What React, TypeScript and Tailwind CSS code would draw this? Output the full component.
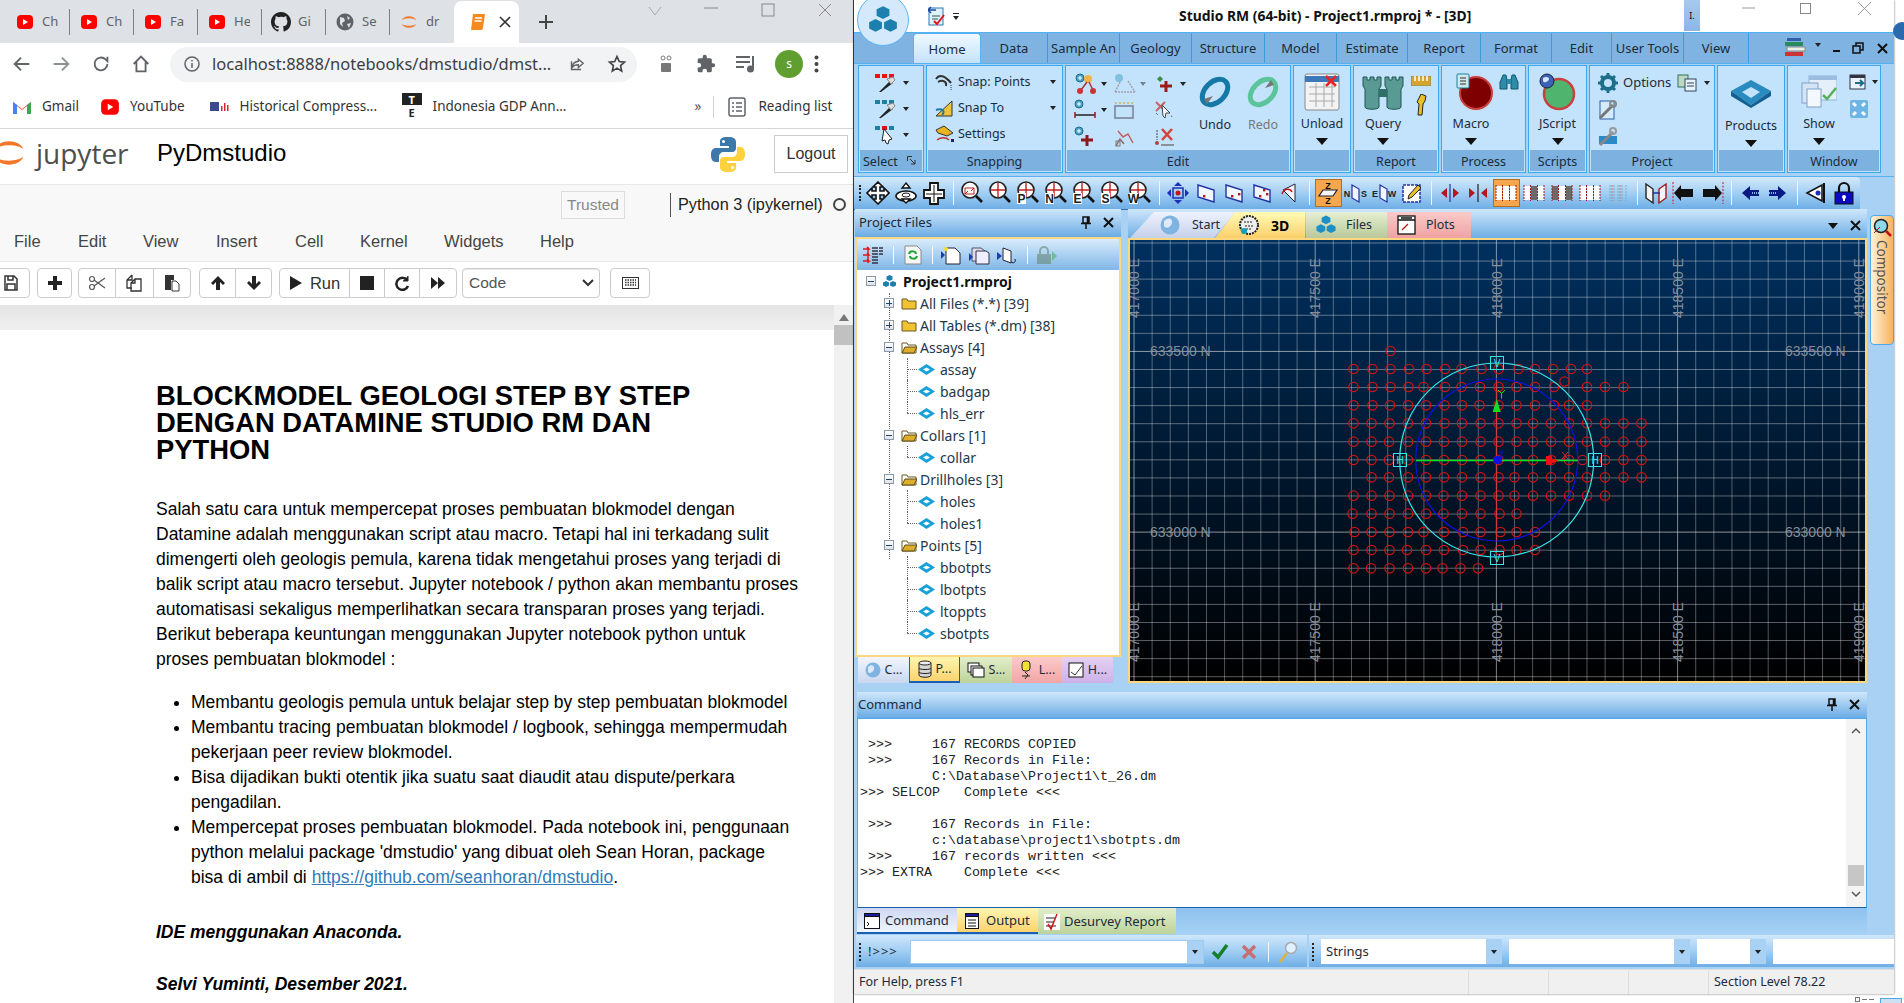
import React from "react";

const UI = "'Noto Sans', 'Open Sans', sans-serif";

// --- small drawings used around the browser window ---
function Yt({ size = 18 }: { size?: number }) {
  return (
    <svg width={size} height={size} viewBox="0 0 18 18">
      <rect x="1" y="2" width="16" height="14" rx="4" fill="#f00" />
      <path d="M7 6l5 3-5 3z" fill="#fff" />
    </svg>
  );
}

function GithubMark() {
  return (
    <svg width="20" height="20" viewBox="0 0 16 16" fill="#222">
      <path d="M8 0C3.58 0 0 3.58 0 8c0 3.54 2.29 6.53 5.47 7.59.4.07.55-.17.55-.38v-1.34c-2.23.48-2.7-1.07-2.7-1.07-.36-.92-.89-1.17-.89-1.17-.73-.5.05-.49.05-.49.8.06 1.23.82 1.23.82.72 1.22 1.87.87 2.33.66.07-.52.28-.87.51-1.07-1.78-.2-3.64-.89-3.64-3.95 0-.87.31-1.59.82-2.15-.08-.2-.36-1.02.08-2.12 0 0 .67-.21 2.2.82A7.7 7.7 0 018 3.87c.68 0 1.36.09 2 .27 1.53-1.04 2.2-.82 2.2-.82.44 1.1.16 1.92.08 2.12.51.56.82 1.27.82 2.15 0 3.07-1.87 3.75-3.65 3.95.29.25.54.73.54 1.48v2.2c0 .21.15.46.55.38A8 8 0 0016 8c0-4.42-3.58-8-8-8z" />
    </svg>
  );
}

function Globe() {
  return (
    <svg width="18" height="18" viewBox="0 0 18 18">
      <circle cx="9" cy="9" r="8.5" fill="#5f6368" />
      <path d="M4 4l4 1 1 3-3 2 1 4-3-3zM11 3l3 2-2 2zM11 11l4-1-2 5z" fill="#dee1e6" />
    </svg>
  );
}

function JupyterArcs({ size = 18 }: { size?: number }) {
  return (
    <svg width={size} height={size} viewBox="0 0 20 20">
      <path d="M2 8c2-6 14-6 16 0-3-3-13-3-16 0zM2 12c2 6 14 6 16 0-3 3-13 3-16 0z" fill="#f37726" />
    </svg>
  );
}

function NotebookFav() {
  return (
    <svg width="18" height="20" viewBox="0 0 18 20">
      <path d="M4 2h12l-2 14a2 2 0 01-2 2H2z" fill="#f58a1f" />
      <path d="M6 6h7M5.5 9h7" stroke="#fff" strokeWidth="1.5" />
    </svg>
  );
}

function PythonLogo() {
  return (
    <svg width="36" height="37" viewBox="0 0 36 37">
      <path d="M18 1c-7 0-8 2-8 5v4h9v2H6c-3 0-5 2-5 7s2 7 5 7h3v-5c0-3 2-5 5-5h8c3 0 4-2 4-4V6c0-3-2-5-8-5z" fill="#3c78aa" />
      <circle cx="13.5" cy="5.5" r="1.5" fill="#fff" />
      <path d="M18 36c7 0 8-2 8-5v-4h-9v-2h13c3 0 5-2 5-7s-2-7-5-7h-3v5c0 3-2 5-5 5h-8c-3 0-4 2-4 4v6c0 3 2 5 8 5z" fill="#fdd23e" />
      <circle cx="22.5" cy="31.5" r="1.5" fill="#fff" />
    </svg>
  );
}

function ChromeTab({ icon, label, last }: { icon: React.ReactNode; label: string; last?: boolean }) {
  return (
    <div className={`flex h-[26px] w-[64px] items-center pl-[9px] ${last ? "" : "border-r border-[#7d8085]"}`}>
      <div className="flex w-[20px] justify-center">{icon}</div>
      <span className="ml-[7px] w-[16px] overflow-hidden whitespace-nowrap text-[13px] text-[#5f6368]">{label}</span>
    </div>
  );
}

function NavIcon({ d, x }: { d: string; x?: string }) {
  return (
    <svg width="22" height="22" viewBox="0 0 24 24" fill="none" stroke="#5f6368" strokeWidth="2" className={x}>
      <path d={d} />
    </svg>
  );
}

function JBtn({ children, w }: { children: React.ReactNode; w: string }) {
  return <div className={`flex h-full items-center justify-center border-r border-[#ccc] last:border-r-0 ${w}`}>{children}</div>;
}

function Browser() {
  return (
    <div className="flex h-full w-[853px] shrink-0 flex-col overflow-hidden bg-white" style={{ fontFamily: "'Liberation Sans', Arial, sans-serif" }}>
      {/* tab strip */}
      <div className="flex h-[43px] shrink-0 items-center bg-[#dee1e6] pl-[6px]" style={{ fontFamily: UI }}>
        <ChromeTab icon={<Yt />} label="Ch" />
        <ChromeTab icon={<Yt />} label="Ch" />
        <ChromeTab icon={<Yt />} label="Fa" />
        <ChromeTab icon={<Yt />} label="He" />
        <ChromeTab icon={<GithubMark />} label="Gi" />
        <ChromeTab icon={<Globe />} label="Se" />
        <ChromeTab icon={<JupyterArcs />} label="dr" last />
        <div className="flex h-[42px] w-[65px] items-center self-end rounded-t-lg bg-white pl-[15px]">
          <NotebookFav />
          <svg width="12" height="12" viewBox="0 0 12 12" className="ml-[12px]" stroke="#333" strokeWidth="1.6">
            <path d="M1 1l10 10M11 1L1 11" />
          </svg>
        </div>
        <svg width="18" height="18" viewBox="0 0 18 18" stroke="#444" strokeWidth="2" className="ml-[18px]">
          <path d="M9 2v14M2 9h14" />
        </svg>
        <div className="ml-auto flex h-full items-start pt-[3px]">
          <svg width="14" height="12" viewBox="0 0 14 12" fill="none" stroke="#aaa" className="mr-[42px] mt-[2px]">
            <path d="M1 2l6 8 6-8" />
          </svg>
          <svg width="14" height="12" viewBox="0 0 14 12" stroke="#888" className="mr-[43px]">
            <path d="M0 5h14" />
          </svg>
          <svg width="14" height="14" viewBox="0 0 14 14" fill="none" stroke="#888" className="mr-[43px]">
            <rect x="1" y="1" width="12" height="12" />
          </svg>
          <svg width="14" height="14" viewBox="0 0 14 14" stroke="#888" className="mr-[21px]">
            <path d="M1 1l12 12M13 1L1 13" />
          </svg>
        </div>
      </div>

      {/* address bar */}
      <div className="flex h-[42px] shrink-0 items-center pl-[11px]" style={{ fontFamily: UI }}>
        <NavIcon d="M20 12H5m6-7l-7 7 7 7" />
        <NavIcon d="M4 12h15m-6-7l7 7-7 7" x="ml-[17px] opacity-70" />
        <NavIcon d="M19 12a7 7 0 11-2-5l2 2V4" x="ml-[18px]" />
        <NavIcon d="M4 12l8-8 8 8M7 10v10h10V10" x="ml-[18px]" />
        <div className="ml-[18px] flex h-[35px] w-[467px] items-center rounded-full bg-[#f1f3f4] pl-[14px]">
          <svg width="16" height="16" viewBox="0 0 16 16" fill="none" stroke="#5f6368" strokeWidth="1.5">
            <circle cx="8" cy="8" r="7" />
            <path d="M8 7v5M8 4v1.5" />
          </svg>
          <span className="ml-[12px] w-[350px] whitespace-nowrap text-[16.5px] text-[#3c4043]">localhost:8888/notebooks/dmstudio/dmst...</span>
          <NavIcon d="M14 5l7 6-7 6v-4c-4 0-7 1-9 4 0-5 3-8 9-9zM4 8v12h14" x="ml-[4px] scale-75" />
          <svg width="20" height="20" viewBox="0 0 24 24" fill="none" stroke="#444" strokeWidth="2" className="ml-[19px]">
            <path d="M12 3l2.7 6 6.3.7-4.7 4.3 1.3 6.5L12 17l-5.6 3.5 1.3-6.5L3 9.7 9.3 9z" />
          </svg>
        </div>
        <svg width="14" height="18" viewBox="0 0 14 18" fill="#777" className="ml-[22px]">
          <rect x="2" y="8" width="10" height="9" rx="1" />
          <circle cx="4" cy="3" r="2" fill="none" stroke="#777" />
          <circle cx="10" cy="3" r="2" fill="none" stroke="#777" />
        </svg>
        <svg width="20" height="20" viewBox="0 0 24 24" fill="#5f6368" className="ml-[23px]">
          <path d="M20.5 11H19V7a2 2 0 00-2-2h-4V3.5a2.5 2.5 0 00-5 0V5H4a2 2 0 00-2 2v3.8h1.5a2.7 2.7 0 010 5.4H2V20a2 2 0 002 2h3.8v-1.5a2.7 2.7 0 015.4 0V22H17a2 2 0 002-2v-4h1.5a2.5 2.5 0 000-5z" />
        </svg>
        <svg width="22" height="20" viewBox="0 0 22 20" stroke="#5f6368" strokeWidth="2" fill="none" className="ml-[19px]">
          <path d="M1 3h14M1 8h14M1 13h8M18 2v12" />
          <circle cx="15.5" cy="15" r="2.5" fill="#5f6368" />
        </svg>
        <div className="ml-[18px] flex h-[28px] w-[28px] items-center justify-center rounded-full bg-[#5f9e2f] text-[12px] text-white">s</div>
        <svg width="5" height="18" viewBox="0 0 5 18" fill="#444" className="ml-[11px]">
          <circle cx="2.5" cy="2.5" r="2" />
          <circle cx="2.5" cy="9" r="2" />
          <circle cx="2.5" cy="15.5" r="2" />
        </svg>
      </div>

      {/* bookmarks */}
      <div className="flex h-[44px] shrink-0 items-center border-b border-[#d6d6d6] pl-[12px] text-[13.5px] text-[#333]" style={{ fontFamily: UI }}>
        <svg width="20" height="16" viewBox="0 0 20 16">
          <path d="M1 15V3l9 7 9-7v12h-4V7l-5 4-5-4v8z" fill="#ea4335" />
          <path d="M1 15V3l4 3v9z" fill="#4285f4" />
          <path d="M15 15V6l4-3v12z" fill="#34a853" />
        </svg>
        <span className="ml-[10px]">Gmail</span>
        <div className="ml-[21px]"><Yt size={20} /></div>
        <span className="ml-[10px]">YouTube</span>
        <svg width="20" height="14" viewBox="0 0 20 14" className="ml-[25px]">
          <rect x="0" y="2" width="9" height="9" fill="#3a4a8f" />
          <path d="M11 11V6h1.5v5zM14 11V3h1.5v8zM17 11V5h1.5v6z" fill="#d23" />
        </svg>
        <span className="ml-[10px] w-[152px] whitespace-nowrap">Historical Compress...</span>
        <div className="ml-[10px] flex w-[20px] flex-col items-center text-[11px] font-bold leading-[15px]">
          <span className="flex h-[12px] w-[20px] items-center justify-center bg-[#222] text-white">T</span>
          <span className="h-[15px] text-[#222]">E</span>
        </div>
        <span className="ml-[11px] w-[145px] whitespace-nowrap">Indonesia GDP Ann...</span>
        <span className="ml-[117px] text-[#555]">»</span>
        <div className="ml-[12px] h-[22px] w-px bg-[#d0d0d0]" />
        <svg width="18" height="20" viewBox="0 0 18 20" fill="none" stroke="#5f6368" strokeWidth="1.5" className="ml-[14px]">
          <rect x="1" y="1" width="16" height="18" rx="2" />
          <path d="M4 6h2M8 6h6M4 10h2M8 10h6M4 14h2M8 14h6" />
        </svg>
        <span className="ml-[12px] whitespace-nowrap">Reading list</span>
      </div>

      {/* jupyter header */}
      <div className="relative flex h-[56px] shrink-0 items-center border-b border-[#e7e7e7] pb-[8px]">
        <div className="absolute left-[-9px] top-[6px]"><JupyterArcs size={36} /></div>
        <span className="ml-[36px] w-[121px] text-[28px] leading-none text-[#4e4e4e]" style={{ fontFamily: "'Open Sans', sans-serif" }}>jupyter</span>
        <span className="text-[24px] text-black">PyDmstudio</span>
        <div className="absolute right-[5px] top-[6px] flex items-center">
          <PythonLogo />
          <div className="ml-[28px] flex h-[38px] w-[74px] items-center justify-center border border-[#ccc] text-[16px] text-[#333]">Logout</div>
        </div>
      </div>

      {/* kernel row */}
      <div className="flex h-[39px] shrink-0 items-center bg-[#f8f8f8] pl-[561px]">
        <div className="flex h-[28px] w-[64px] items-center justify-center border border-[#ddd] text-[15.5px] text-[#888]">Trusted</div>
        <div className="ml-[45px] h-[24px] w-px bg-[#555]" />
        <span className="ml-[7px] whitespace-nowrap text-[16.3px] text-[#222]">Python 3 (ipykernel)</span>
        <div className="ml-[10px] h-[13px] w-[13px] rounded-full border-2 border-[#444]" />
      </div>

      {/* menu */}
      <div className="relative flex h-[38px] shrink-0 items-center border-b border-[#e7e7e7] bg-[#f8f8f8] pb-[2px] text-[16.5px] text-[#444]">
        <span className="absolute left-[14px]">File</span>
        <span className="absolute left-[78px]">Edit</span>
        <span className="absolute left-[143px]">View</span>
        <span className="absolute left-[216px]">Insert</span>
        <span className="absolute left-[295px]">Cell</span>
        <span className="absolute left-[360px]">Kernel</span>
        <span className="absolute left-[444px]">Widgets</span>
        <span className="absolute left-[540px]">Help</span>
      </div>

      {/* notebook toolbar */}
      <div className="flex h-[43px] shrink-0 items-start bg-white pt-[6px] text-[#333]">
        <div className="ml-[-8px] flex h-[30px] w-[38px] items-center justify-center rounded-sm border border-[#ccc]">
          <svg width="14" height="16" viewBox="0 0 14 16" fill="none" stroke="#333" strokeWidth="1.5">
            <path d="M1 1h9l3 3v11H1zM4 1v4h5V1M3 9h8v6H3z" />
          </svg>
        </div>
        <div className="ml-[7px] flex h-[30px] w-[35px] items-center justify-center rounded-sm border border-[#ccc]">
          <svg width="14" height="14" viewBox="0 0 14 14" fill="#222"><path d="M5 0h4v5h5v4H9v5H5V9H0V5h5z" /></svg>
        </div>
        <div className="ml-[6px] flex h-[30px] w-[113px] rounded-sm border border-[#ccc]">
          <JBtn w="w-[38px]">
            <svg width="18" height="16" viewBox="0 0 18 16" fill="none" stroke="#555" strokeWidth="1.2">
              <circle cx="4" cy="4" r="2.5" /><circle cx="4" cy="12" r="2.5" />
              <path d="M6 5l11 8M6 11l11-8" />
            </svg>
          </JBtn>
          <JBtn w="w-[38px]">
            <svg width="16" height="18" viewBox="0 0 16 18" fill="none" stroke="#333" strokeWidth="1.3">
              <path d="M6 1L1 6v8h5M6 1v5H1M9 5L5 9v8h10V5zM9 5v4H5" />
            </svg>
          </JBtn>
          <JBtn w="w-[37px]">
            <svg width="16" height="18" viewBox="0 0 16 18">
              <path d="M1 1h9v5H7v10H1z" fill="#333" />
              <path d="M8 7h4l3 3v7H8z" fill="#fff" stroke="#333" />
            </svg>
          </JBtn>
        </div>
        <div className="ml-[8px] flex h-[30px] w-[73px] rounded-sm border border-[#ccc]">
          <JBtn w="w-[37px]">
            <svg width="16" height="16" viewBox="0 0 16 16" fill="#222"><path d="M8 1l7 7-2 2-3-3v8H6V7l-3 3-2-2z" /></svg>
          </JBtn>
          <JBtn w="w-[36px]">
            <svg width="16" height="16" viewBox="0 0 16 16" fill="#222"><path d="M8 15L1 8l2-2 3 3V1h4v8l3-3 2 2z" /></svg>
          </JBtn>
        </div>
        <div className="ml-[7px] flex h-[30px] w-[178px] rounded-sm border border-[#ccc]">
          <JBtn w="w-[71px]">
            <svg width="14" height="16" viewBox="0 0 14 16" fill="#222"><path d="M1 1l12 7-12 7z" /></svg>
            <span className="ml-[7px] text-[16.5px]">Run</span>
          </JBtn>
          <JBtn w="w-[35px]"><div className="h-[14px] w-[14px] bg-[#222]" /></JBtn>
          <JBtn w="w-[36px]">
            <svg width="15" height="16" viewBox="0 0 15 16" fill="none" stroke="#222" strokeWidth="2.5">
              <path d="M13 11a6 6 0 11-1-6" /><path d="M13 1v5H8" fill="#222" strokeWidth="1" />
            </svg>
          </JBtn>
          <JBtn w="w-[36px]">
            <svg width="16" height="14" viewBox="0 0 16 14" fill="#222"><path d="M1 1l7 6-7 6zM8 1l7 6-7 6z" /></svg>
          </JBtn>
        </div>
        <div className="ml-[5px] flex h-[30px] w-[138px] items-center justify-between rounded-sm border border-[#ccc] pl-[6px] pr-[5px] text-[15.5px] text-[#555] shadow-[inset_0_1px_1px_rgba(0,0,0,0.1)]">
          Code
          <svg width="12" height="8" viewBox="0 0 12 8" fill="none" stroke="#333" strokeWidth="2"><path d="M1 1l5 5 5-5" /></svg>
        </div>
        <div className="ml-[10px] flex h-[30px] w-[40px] items-center justify-center rounded-sm border border-[#ccc]">
          <svg width="17" height="12" viewBox="0 0 17 12" fill="none" stroke="#333">
            <rect x=".5" y=".5" width="16" height="11" />
            <path d="M3 3h11M3 5.5h11M3 8h11" strokeDasharray="1.5 1" strokeWidth="1.5" />
          </svg>
        </div>
      </div>

      {/* notebook */}
      <div className="relative flex min-h-0 flex-1">
        <div className="min-w-0 flex-1">
          <div className="h-[25px] bg-gradient-to-b from-[#e4e4e4] to-[#f0f0f0]" />
          <div className="w-[800px] pl-[156px] pt-[52px] text-[17.5px] leading-[25px] text-black">
            <h1 className="w-[600px] text-[27.4px] font-bold leading-[27px]">BLOCKMODEL GEOLOGI STEP BY STEP DENGAN DATAMINE STUDIO RM DAN PYTHON</h1>
            <p className="mt-[34px]">
              Salah satu cara untuk mempercepat proses pembuatan blokmodel dengan Datamine adalah menggunakan script atau macro. Tetapi hal ini terkadang sulit dimengerti oleh geologis pemula, karena tidak mengetahui proses yang terjadi di balik script atau macro tersebut. Jupyter notebook / python akan membantu proses automatisasi sekaligus memperlihatkan secara transparan proses yang terjadi. Berikut beberapa keuntungan menggunakan Jupyter notebook python untuk proses pembuatan blokmodel :
            </p>
            <ul className="mt-[18px] list-disc pl-[35px]">
              <li>Membantu geologis pemula untuk belajar step by step pembuatan blokmodel</li>
              <li>Membantu tracing pembuatan blokmodel / logbook, sehingga mempermudah pekerjaan peer review blokmodel.</li>
              <li>Bisa dijadikan bukti otentik jika suatu saat diaudit atau dispute/perkara pengadilan.</li>
              <li>
                Mempercepat proses pembuatan blokmodel. Pada notebook ini, penggunaan python melalui package 'dmstudio' yang dibuat oleh Sean Horan, package bisa di ambil di{" "}
                <a className="text-[#337ab7] underline">https://github.com/seanhoran/dmstudio</a>.
              </li>
            </ul>
            <p className="mt-[30px] font-bold italic">IDE menggunakan Anaconda.</p>
            <p className="mt-[27px] font-bold italic">Selvi Yuminti, Desember 2021.</p>
          </div>
        </div>
        <div className="flex w-[19px] shrink-0 flex-col items-center bg-[#f1f1f1]">
          <svg width="10" height="7" viewBox="0 0 10 7" fill="#777" className="mt-[9px]"><path d="M5 0l5 7H0z" /></svg>
          <div className="mt-[4px] h-[20px] w-full bg-[#c1c1c1]" />
        </div>
      </div>
    </div>
  );
}

// --- Studio RM ribbon icons ---
function Picker({ top, tool }: { top: string; tool?: boolean }) {
  return (
    <svg width="28" height="20" viewBox="0 0 28 20">
      <rect x="1" y="1" width="5" height="4" fill={top} /><rect x="8" y="1" width="5" height="4" fill={tool ? "#d11" : top} /><rect x="15" y="1" width="5" height="4" fill={top} />
      {tool ? (
        <path d="M10 4l8 10-3 1-1 4-2-1-1-3-3 1z" fill="#fff" stroke="#222" />
      ) : (
        <>
          <path d="M5 19l11-11 3 2-12 9z" fill="#222" />
          <path d="M13 6l6-2 2 3-4 4z" fill="#ddd" stroke="#888" />
        </>
      )}
    </svg>
  );
}

function TinyArrow({ className = "" }: { className?: string }) {
  return <span className={`inline-block border-x-[3.5px] border-t-[4px] border-x-transparent border-t-[#222] ${className}`} />;
}

function BigArrow() {
  return <span className="inline-block border-x-[6px] border-t-[7px] border-x-transparent border-t-[#111]" />;
}

function EditIcon({ n }: { n: number }) {
  const plus = "#8b1a1a";
  if (n === 0)
    return (
      <svg width="26" height="22" viewBox="0 0 26 22">
        <circle cx="7" cy="5" r="4" fill="#4fa3c7" stroke="#1d6c8e" /><path d="M7 3v4M5 5h4" stroke="#fff" />
        <circle cx="15" cy="6" r="4" fill="#f2b34a" /><path d="M14 9l-6 8M16 9l4 8" stroke="#a33" strokeWidth="1.5" />
        <circle cx="7" cy="18" r="3" fill="#c33" /><circle cx="20" cy="18" r="3" fill="#c33" />
      </svg>
    );
  if (n === 1)
    return (
      <svg width="26" height="22" viewBox="0 0 26 22" opacity=".55">
        <circle cx="7" cy="5" r="4" fill="#4fa3c7" /><path d="M3 19h20M8 9l-5 10M16 8l7 11" stroke="#8a6a6a" strokeDasharray="2 1" strokeWidth="1.5" />
      </svg>
    );
  if (n === 2)
    return (
      <svg width="26" height="22" viewBox="0 0 26 22">
        <path d="M8 3l3 3-3 3-3-3z" fill="#3c8c4c" /><path d="M14 8v11M8 13h12" stroke="#a01919" strokeWidth="3" />
      </svg>
    );
  if (n === 3)
    return (
      <svg width="26" height="22" viewBox="0 0 26 22">
        <circle cx="6" cy="5" r="4" fill="#4fa3c7" stroke="#1d6c8e" /><path d="M6 3v4M4 5h4" stroke="#fff" />
        <path d="M2 16h20" stroke="#222" strokeWidth="1.5" /><path d="M2 13v6M22 13v6" stroke="#a01919" strokeWidth="1.5" />
      </svg>
    );
  if (n === 4)
    return (
      <svg width="26" height="22" viewBox="0 0 26 22" opacity=".7">
        <rect x="3" y="7" width="18" height="12" fill="none" stroke="#556" strokeWidth="1.5" />
        <path d="M3 4h18" stroke="#c9b24a" strokeDasharray="2 2" strokeWidth="2" />
      </svg>
    );
  if (n === 5)
    return (
      <svg width="26" height="22" viewBox="0 0 26 22">
        <path d="M4 3l9 9M13 3l-9 9" stroke="#c8453f" strokeWidth="2" opacity=".8" /><path d="M10 6l8 8-4 0-1 5-2-2z" fill="#fff" stroke="#444" />
        <path d="M4 14l2 2M19 17l2 1" stroke="#444" strokeDasharray="1 1" />
      </svg>
    );
  if (n === 6)
    return (
      <svg width="26" height="22" viewBox="0 0 26 22">
        <circle cx="6" cy="5" r="4" fill="#4fa3c7" stroke="#1d6c8e" /><path d="M6 3v4M4 5h4" stroke="#fff" />
        <path d="M14 9v11M8 14h12" stroke={plus} strokeWidth="3" />
      </svg>
    );
  if (n === 7)
    return (
      <svg width="26" height="22" viewBox="0 0 26 22" fill="none" stroke="#8a6a6a" strokeWidth="1.5">
        <path d="M6 5l5 6 5-3 5 9" stroke="#c06060" /><path d="M4 20l4-7 4 5" /><rect x="4" y="15" width="4" height="5" stroke="#777" strokeWidth="1" />
      </svg>
    );
  return (
    <svg width="26" height="22" viewBox="0 0 26 22">
      <path d="M10 3l10 11M20 3L10 14" stroke="#d0443e" strokeWidth="2.5" /><path d="M5 4v10" stroke="#444" strokeDasharray="2 1" /><circle cx="5" cy="17" r="2" fill="#a44" /><path d="M9 19h13" stroke="#777" strokeWidth="1.5" />
    </svg>
  );
}

function RingIcon({ kind }: { kind: "undo" | "redo" }) {
  const c = kind === "undo" ? "#1678a6" : "#5cc49a";
  return (
    <svg width="34" height="34" viewBox="0 0 34 34">
      <ellipse cx="17" cy="17" rx="15" ry="10" fill="none" stroke={c} strokeWidth="5" transform="rotate(-45 17 17)" />
      <path d={kind === "undo" ? "M6 24l9-3-6 8z" : "M28 10l-9 3 6-8z"} fill="#777" />
    </svg>
  );
}

function Group({ w, title, corner, children, className = "" }: { w: string; title?: string; corner?: boolean; children: React.ReactNode; className?: string }) {
  return (
    <div className={`flex h-[108px] shrink-0 flex-col border border-[#3ba9ee] bg-[#c3e3fc] p-px ${w}`}>
      <div className={`relative min-h-0 flex-1 ${className}`}>{children}</div>
      <div className="relative flex h-[21px] shrink-0 items-center justify-center bg-[#7db1e0] pt-[3px] text-[12.5px] text-[#1b2b3a]">
        {corner ? <span className="w-full pl-[3px]">{title}</span> : title}
        {corner && (
          <svg width="9" height="9" viewBox="0 0 9 9" fill="none" stroke="#333" className="absolute right-[6px] top-[6px]">
            <path d="M0.5 5V.5H5M3 3l5 5M8 4v4H4" />
          </svg>
        )}
      </div>
    </div>
  );
}

function RibbonTab({ label, w, active }: { label: string; w: string; active?: boolean }) {
  return (
    <div className={`flex h-[30px] shrink-0 items-center justify-center whitespace-nowrap pt-[2px] text-[13px] text-[#1b2b3a] ${w} ${active ? "rounded-t-sm border-x border-t border-[#58b2ef] bg-gradient-to-b from-[#f0f8ff] to-[#c3e3fc]" : "border-r border-[#3d9be0]"}`}>
      {label}
    </div>
  );
}

function Ribbon() {
  return (
    <>
      <div className="flex h-[31px] shrink-0 items-end border-t border-[#4fb2f2] bg-[#7fb3e1] pl-[59px]">
        <RibbonTab label="Home" w="w-[68px]" active />
        <RibbonTab label="Data" w="w-[67px]" />
        <RibbonTab label="Sample An" w="w-[72px]" />
        <RibbonTab label="Geology" w="w-[72px]" />
        <RibbonTab label="Structure" w="w-[73px]" />
        <RibbonTab label="Model" w="w-[72px]" />
        <RibbonTab label="Estimate" w="w-[71px]" />
        <RibbonTab label="Report" w="w-[73px]" />
        <RibbonTab label="Format" w="w-[71px]" />
        <RibbonTab label="Edit" w="w-[60px]" />
        <RibbonTab label="User Tools" w="w-[72px]" />
        <RibbonTab label="View" w="w-[65px]" />
        <div className="flex h-[30px] flex-1 items-center pl-[35px]">
          <svg width="22" height="20" viewBox="0 0 22 20">
            <rect x="1" y="14" width="18" height="4" fill="#c33" /><rect x="3" y="9" width="18" height="4" fill="#eee" stroke="#888" /><rect x="1" y="4" width="18" height="4" fill="#2a8a5c" /><rect x="3" y="0" width="14" height="3" fill="#335fa8" />
          </svg>
          <TinyArrow className="ml-[9px] mb-[6px]" />
          <span className="ml-[12px] mt-[6px] h-[2px] w-[7px] bg-[#111]" />
          <svg width="12" height="12" viewBox="0 0 12 12" fill="none" stroke="#111" strokeWidth="1.5" className="ml-[12px]">
            <path d="M1 4h7v7H1zM4 4V1h7v7H8" />
          </svg>
          <svg width="11" height="11" viewBox="0 0 11 11" stroke="#111" strokeWidth="2" className="ml-[13px]">
            <path d="M1 1l9 9M10 1l-9 9" />
          </svg>
        </div>
      </div>
      <div className="flex h-[114px] shrink-0 gap-[2px] border-y border-[#58b2ef] bg-[#a8d1f3] pl-[4px] pt-[1px] text-[12.5px] text-[#1b2b3a]">
        <Group w="w-[66px]" title="Select" corner>
          <div className="flex flex-col items-center gap-[6px] pt-[6px]">
            <div className="flex items-center gap-[1px]"><Picker top="#e11" /><TinyArrow /></div>
            <div className="flex items-center gap-[1px]"><Picker top="#1f7f9e" /><TinyArrow /></div>
            <div className="flex items-center gap-[1px]"><Picker top="#1f7f9e" tool /><TinyArrow /></div>
          </div>
        </Group>
        <Group w="w-[137px]" title="Snapping">
          <div className="flex flex-col gap-[4px] pl-[6px] pt-[4px]">
            <div className="flex h-[22px] items-center">
              <svg width="22" height="20" viewBox="0 0 22 20" fill="none" stroke="#333"><path d="M2 7c4-6 10-2 15 4M4 10c5-3 9 0 8 4" strokeWidth="2" /><path d="M17 13v6" strokeDasharray="1 1" /></svg>
              <span className="ml-[2px] w-[92px]">Snap: Points</span><TinyArrow />
            </div>
            <div className="flex h-[22px] items-center">
              <svg width="22" height="20" viewBox="0 0 22 20"><path d="M2 18L18 3v15z" fill="#efc23a" stroke="#333" /><path d="M2 12c6-2 10 1 6 5" fill="none" stroke="#1b78a8" strokeWidth="2" /></svg>
              <span className="ml-[2px] w-[92px]">Snap To</span><TinyArrow />
            </div>
            <div className="flex h-[22px] items-center">
              <svg width="22" height="20" viewBox="0 0 22 20"><path d="M2 6l8-4 9 7-6 3-9-3z" fill="#e8b321" stroke="#333" /><path d="M3 16c4-3 9-3 12 0" fill="none" stroke="#b33" strokeWidth="1.5" /><rect x="17" y="15" width="3" height="3" fill="#226" /></svg>
              <span className="ml-[2px]">Settings</span>
            </div>
          </div>
        </Group>
        <Group w="w-[226px]" title="Edit" className="flex">
          <div className="grid w-[124px] grid-cols-3 grid-rows-3 gap-y-[1px] pl-[6px] pt-[4px]">
            {[0, 1, 2, 3, 4, 5, 6, 7, 8].map((n) => (
              <div key={n} className="flex h-[25px] items-center gap-[2px]">
                <EditIcon n={n} />
                {(n === 0 || n === 1 || n === 2 || n === 3) && <TinyArrow className={n === 1 ? "opacity-50" : ""} />}
              </div>
            ))}
          </div>
          <div className="flex w-[48px] flex-col items-center pt-[8px]">
            <RingIcon kind="undo" />
            <span className="mt-[7px]">Undo</span>
          </div>
          <div className="flex w-[48px] flex-col items-center pt-[8px] text-[#777]">
            <RingIcon kind="redo" />
            <span className="mt-[7px]">Redo</span>
          </div>
        </Group>
        <Group w="w-[58px]" className="flex flex-col items-center pt-[6px]">
          <svg width="36" height="38" viewBox="0 0 36 38">
            <rect x="1" y="1" width="34" height="36" rx="2" fill="#f3f3f3" stroke="#888" />
            <rect x="1" y="3" width="34" height="6" fill="#3d79b8" />
            <path d="M5 14h26M5 21h26M5 28h26M12 10v24M20 10v24M28 10v24" stroke="#aaa" />
            <path d="M22 3l10 10M32 3L22 13" stroke="#e22" strokeWidth="2.5" />
          </svg>
          <span className="mt-[4px]">Unload</span>
          <div className="mt-[1px] leading-none"><BigArrow /></div>
        </Group>
        <Group w="w-[86px]" title="Report" className="flex">
          <div className="flex w-[56px] flex-col items-center pt-[6px]">
            <svg width="44" height="38" viewBox="0 0 44 38">
              <path d="M2 13V4h4v3h3V4h4v3h3V4h4v9l-2 3v18c0 3-14 3-14 0V16zM24 13V4h4v3h3V4h4v3h3V4h4v9l-2 3v18c0 3-14 3-14 0V16z" fill="#5a9a94" stroke="#1f5450" />
              <rect x="18" y="16" width="8" height="8" fill="#2f6f6a" />
            </svg>
            <span className="mt-[4px]">Query</span>
            <div className="mt-[1px] leading-none"><BigArrow /></div>
          </div>
          <div className="flex flex-col items-center gap-[8px] pt-[9px]">
            <svg width="20" height="10" viewBox="0 0 20 10"><rect width="20" height="10" fill="#d3a52c" stroke="#886" /><path d="M4 0v5M8 0v5M12 0v5M16 0v5" stroke="#fff" strokeWidth="1.5" /></svg>
            <svg width="12" height="22" viewBox="0 0 12 22"><path d="M6 0l5 2-1 5-2 3-1 11H3l1-11-2-2z" fill="#e8c12a" stroke="#222" /></svg>
          </div>
        </Group>
        <Group w="w-[85px]" title="Process" className="flex">
          <div className="flex w-[56px] flex-col items-center pt-[6px]">
            <svg width="40" height="38" viewBox="0 0 40 38" className="ml-[8px]">
              <circle cx="21" cy="20" r="16" fill="#7e0000" stroke="#c94040" strokeWidth="2" />
              <circle cx="21" cy="20" r="18" fill="none" stroke="#c9dcf0" strokeWidth="1" />
              <rect x="2" y="1" width="12" height="14" rx="1" fill="#cfe8ee" stroke="#1f7f9e" />
              <path d="M5 5h6M5 8h6M5 11h6" stroke="#333" />
            </svg>
            <span className="mt-[4px]">Macro</span>
            <div className="mt-[1px] leading-none"><BigArrow /></div>
          </div>
          <svg width="20" height="18" viewBox="0 0 20 18" className="mt-[6px]">
            <path d="M2 7l2-5h3l1 5v9H1V9zM12 7l1-5h3l2 5 1 2v7h-7z" fill="#2f8ca8" stroke="#13566c" />
            <rect x="8" y="6" width="4" height="5" fill="#2f8ca8" />
          </svg>
        </Group>
        <Group w="w-[59px]" title="Scripts" className="flex flex-col items-center pt-[6px]">
          <svg width="40" height="38" viewBox="0 0 40 38">
            <circle cx="21" cy="21" r="15" fill="#4fb56e" stroke="#c94040" strokeWidth="2.5" />
            <circle cx="9" cy="8" r="7" fill="#3a62b8" stroke="#223" />
            <path d="M5 5c3-2 6-1 6 1s-5 5-6 2z" fill="#d8e6ff" />
          </svg>
          <span className="mt-[4px]">JScript</span>
          <div className="mt-[1px] leading-none"><BigArrow /></div>
        </Group>
        <Group w="w-[126px]" title="Project">
          <div className="flex flex-col gap-[5px] pl-[7px] pt-[5px]">
            <div className="flex h-[22px] items-center">
              <svg width="20" height="20" viewBox="0 0 20 20"><circle cx="10" cy="10" r="6" fill="none" stroke="#1e6e8a" strokeWidth="4" /><path d="M10 0v4M10 16v4M0 10h4M16 10h4M3 3l3 3M14 14l3 3M17 3l-3 3M6 14l-3 3" stroke="#1e6e8a" strokeWidth="3" /></svg>
              <span className="ml-[5px] text-[13px]">Options</span>
              <svg width="20" height="18" viewBox="0 0 20 18" className="ml-[6px]"><rect x="1" y="1" width="10" height="12" fill="#bcd9c4" stroke="#35705a" /><rect x="8" y="5" width="11" height="12" fill="#e8f3ff" stroke="#345" /><path d="M10 9h7M10 12h7" stroke="#345" /></svg>
              <TinyArrow className="ml-[7px]" />
            </div>
            <div className="flex h-[22px] items-center">
              <svg width="20" height="20" viewBox="0 0 20 20"><rect x="2" y="1" width="14" height="18" fill="#d5ebfb" stroke="#2a5fa8" /><path d="M2 18L15 5" stroke="#777" strokeWidth="3" /><circle cx="15" cy="4" r="3" fill="none" stroke="#888" strokeWidth="2" /></svg>
            </div>
            <div className="flex h-[22px] items-center">
              <svg width="20" height="20" viewBox="0 0 20 20"><rect x="1" y="9" width="18" height="8" fill="#2a8ac8" /><path d="M2 18L15 5" stroke="#888" strokeWidth="3" /><circle cx="15" cy="4" r="3" fill="none" stroke="#999" strokeWidth="2" /></svg>
            </div>
          </div>
        </Group>
        <Group w="w-[68px]" className="flex flex-col items-center pt-[12px]">
          <svg width="42" height="30" viewBox="0 0 42 30">
            <path d="M21 1l20 11-20 14L1 12z" fill="#2a8bc0" />
            <path d="M1 12v5l20 12 20-12v-5L21 26z" fill="#135f8f" />
            <path d="M21 8l9 5-9 6-9-6z" fill="#c3e3fc" />
          </svg>
          <span className="mt-[8px]">Products</span>
          <div className="mt-[1px] leading-none"><BigArrow /></div>
        </Group>
        <Group w="w-[94px]" title="Window" className="flex">
          <div className="flex w-[60px] flex-col items-center pt-[8px]">
            <svg width="36" height="34" viewBox="0 0 36 34">
              <rect x="8" y="1" width="28" height="24" fill="#e4effa" stroke="#8fb2d9" />
              <rect x="8" y="1" width="28" height="4" fill="#9dbde0" />
              <rect x="1" y="8" width="16" height="20" fill="#d4e4f5" stroke="#7f9fc9" />
              <rect x="6" y="14" width="14" height="18" fill="#f3f8ff" stroke="#7f9fc9" />
              <path d="M22 20l4 4 9-11" fill="none" stroke="#57b05a" strokeWidth="2.5" />
            </svg>
            <span className="mt-[6px]">Show</span>
            <div className="mt-[1px] leading-none"><BigArrow /></div>
          </div>
          <div className="flex flex-col items-start gap-[9px] pt-[7px]">
            <div className="flex items-center gap-[3px]">
              <svg width="20" height="16" viewBox="0 0 20 16"><rect x="1" y="1" width="15" height="14" fill="#e8f3ff" stroke="#334" /><rect x="1" y="1" width="15" height="3" fill="#334" /><path d="M6 9h8l-3-3M14 9l-3 3" stroke="#1e6e8a" fill="none" strokeWidth="2" /></svg>
              <TinyArrow />
            </div>
            <svg width="20" height="20" viewBox="0 0 20 20"><rect x="1" y="1" width="18" height="18" rx="2" fill="#6db5e4" /><path d="M4 4l3 3M16 4l-3 3M4 16l3-3M16 16l-3-3" stroke="#fff" strokeWidth="3" /></svg>
          </div>
        </Group>
      </div>
    </>
  );
}

// --- 3D toolbar ---
function ZoomGlass({ letter, box }: { letter?: string; box?: boolean }) {
  return (
    <svg width="24" height="24" viewBox="0 0 24 24">
      <circle cx="10" cy="9" r="8" fill="#fff" stroke="#222" strokeWidth="1.6" />
      {box ? (
        <path d="M5 7h9v6H5zM5 13l3-3M14 7l-3 3" fill="none" stroke="#c02020" />
      ) : (
        <path d="M10 2v14M3 9h14" stroke="#c02020" strokeWidth="1.4" />
      )}
      <path d="M16 15l6 6" stroke="#111" strokeWidth="2.6" />
      {letter && (
        <>
          <rect x="1" y="12" width="9" height="11" fill="#fff" />
          <text x="5.5" y="22" textAnchor="middle" fontSize="12" fontWeight="700" fontFamily="'Liberation Sans', sans-serif" fill="#222">{letter}</text>
        </>
      )}
    </svg>
  );
}

function Plane({ dots, stroke = "#2233a0" }: { dots: number; stroke?: string }) {
  const spots = [[8, 13], [15, 11], [12, 7]].slice(0, dots);
  return (
    <svg width="22" height="22" viewBox="0 0 22 22">
      <path d="M3 3l16 5v12L3 15z" fill="#f1f6ff" stroke={stroke} strokeWidth="1.4" />
      {spots.map((s, i) => <rect key={i} x={s[0]} y={s[1]} width="2.4" height="2.4" fill="#c01818" />)}
    </svg>
  );
}

function Bars({ a, b, c }: { a: string; b: string; c: string }) {
  return (
    <svg width="22" height="22" viewBox="0 0 22 22">
      <rect x="1" y="4" width="6" height="14" fill={a} />
      <rect x="8" y="4" width="6" height="14" fill={b} />
      <rect x="15" y="4" width="6" height="14" fill={c} />
      {[1, 7.5, 14.5, 21].map((x) => <path key={x} d={`M${x} 3v16`} stroke="#a81818" strokeWidth="1" strokeDasharray="2 1" />)}
    </svg>
  );
}

function ToolIcon({ k }: { k: string }) {
  switch (k) {
    case "move":
      return <svg width="24" height="24" viewBox="0 0 24 24"><path d="M12 1l5 5h-3v4h4V7l5 5-5 5v-3h-4v4h3l-5 5-5-5h3v-4H6v3l-5-5 5-5v3h4V6H7z" fill="#fff" stroke="#111" strokeWidth="1.6" /></svg>;
    case "orbit":
      return <svg width="24" height="24" viewBox="0 0 24 24"><ellipse cx="12" cy="15" rx="10" ry="5" fill="#fff" stroke="#111" strokeWidth="1.6" /><path d="M12 2l4 5h-8zM12 22l4-4H8z" fill="#fff" stroke="#111" strokeWidth="1.4" /><ellipse cx="12" cy="14" rx="4" ry="2" fill="none" stroke="#111" /></svg>;
    case "pan":
      return <svg width="24" height="24" viewBox="0 0 24 24"><path d="M8 2h8v7h6v8h-6v6H8v-6H2V9h6z" fill="#fff" stroke="#111" strokeWidth="1.8" /><path d="M12 4v17M4 13h16" stroke="#111" /></svg>;
    case "zbox": return <ZoomGlass box />;
    case "z": return <ZoomGlass />;
    case "zp": return <ZoomGlass letter="P" />;
    case "zn": return <ZoomGlass letter="N" />;
    case "ze": return <ZoomGlass letter="E" />;
    case "zs": return <ZoomGlass letter="S" />;
    case "zw": return <ZoomGlass letter="W" />;
    case "center":
      return <svg width="22" height="22" viewBox="0 0 22 22" fill="#1d2fb5"><path d="M11 0l4 4h-8zM11 22l4-4H7zM0 11l4-4v8zM22 11l-4-4v8z" /><rect x="6" y="6" width="10" height="10" fill="none" stroke="#1d2fb5" strokeWidth="1.5" /><circle cx="11" cy="11" r="2.5" fill="#c01818" /></svg>;
    case "p1": return <Plane dots={1} />;
    case "p2": return <Plane dots={2} />;
    case "p3": return <Plane dots={3} />;
    case "rot":
      return <svg width="22" height="22" viewBox="0 0 22 22" fill="none"><path d="M4 8l12-6v18z" stroke="#223" fill="#f1f6ff" /><path d="M3 12c2-6 8-6 10-2" stroke="#c01818" strokeWidth="1.5" /></svg>;
    case "zplane":
      return <div className="flex h-[28px] w-[27px] flex-col items-center justify-center border border-[#b26d23] bg-[#f6a74d]"><svg width="22" height="24" viewBox="0 0 22 24"><text x="11" y="8" textAnchor="middle" fontSize="9" fontWeight="700" fontFamily="'Liberation Sans', sans-serif" fill="#111">Z</text><path d="M6 9h14l-4 6H2z" fill="#f7f7ff" stroke="#223" strokeWidth="1.2" /><text x="11" y="23" textAnchor="middle" fontSize="9" fontWeight="700" fontFamily="'Liberation Sans', sans-serif" fill="#111">Z</text></svg></div>;
    case "ns":
    case "ew":
      return <svg width="26" height="22" viewBox="0 0 26 22"><text x="4" y="15" textAnchor="middle" fontSize="9" fontWeight="700" fontFamily="'Liberation Sans', sans-serif" fill="#222">{k === "ns" ? "N" : "E"}</text><path d="M9 3l7 4v13l-7-4z" fill="#f1f6ff" stroke="#2233a0" strokeWidth="1.2" /><text x="21" y="15" textAnchor="middle" fontSize="9" fontWeight="700" fontFamily="'Liberation Sans', sans-serif" fill="#222">{k === "ns" ? "S" : "W"}</text></svg>;
    case "pencil":
      return <svg width="22" height="22" viewBox="0 0 22 22"><rect x="2" y="3" width="17" height="17" fill="#fff" stroke="#2233a0" strokeWidth="1.5" strokeDasharray="3 1" /><path d="M7 17l1-4 9-10 3 3-9 9z" fill="#e8c12a" stroke="#222" /></svg>;
    case "split":
      return <svg width="22" height="18" viewBox="0 0 22 18"><path d="M8 4L2 9l6 5zM14 4l6 5-6 5z" fill="#b5161a" /><path d="M11 0v18" stroke="#2233a0" strokeWidth="1.2" /></svg>;
    case "join":
      return <svg width="22" height="18" viewBox="0 0 22 18"><path d="M2 4l6 5-6 5zM20 4l-6 5 6 5z" fill="#b5161a" /><path d="M11 0v18" stroke="#222" strokeWidth="1.2" /></svg>;
    case "barsOn":
      return <div className="flex h-[28px] w-[27px] items-center justify-center border border-[#b26d23] bg-[#f6a74d]"><Bars a="#fff" b="#fff" c="#fff" /></div>;
    case "bars1": return <Bars a="#fff" b="#6a6a6a" c="#fff" />;
    case "bars2": return <Bars a="#6a6a6a" b="#fff" c="#6a6a6a" />;
    case "bars3": return <Bars a="#fff" b="#fff" c="#fff" />;
    case "bars4": return <svg width="22" height="22" viewBox="0 0 22 22" fill="none" strokeDasharray="2 1"><path d="M3 3v16M7 3v16M11 3v16M15 3v16M19 3v16" stroke="#6fb3c4" /><path d="M5 3v16M13 3v16" stroke="#c77" /></svg>;
    case "mirror":
      return <svg width="24" height="24" viewBox="0 0 24 24" fill="none"><path d="M2 3l7 5v14l-7-5z" fill="#f4f4f4" stroke="#222" strokeWidth="1.4" /><path d="M15 8l7-5v14l-7 5z" fill="#f4f4f4" stroke="#a01818" strokeWidth="1.4" /><path d="M9 12h7" stroke="#2233a0" strokeWidth="1.5" /></svg>;
    case "left":
      return <svg width="24" height="24" viewBox="0 0 24 24"><path d="M21 8H9V4l-7 8 7 8v-4h12z" fill="#111" /><path d="M1 1v22" stroke="#c01818" strokeDasharray="2 1.5" /></svg>;
    case "right":
      return <svg width="24" height="24" viewBox="0 0 24 24"><path d="M3 8h12V4l7 8-7 8v-4H3z" fill="#111" /><path d="M23 1v22" stroke="#c01818" strokeDasharray="2 1.5" /></svg>;
    case "bleft":
      return <svg width="24" height="24" viewBox="0 0 24 24"><path d="M21 9h-9V5l-8 7 8 7v-4h9z" fill="#0a1a85" /><path d="M14 12h7" stroke="#7fb7e8" strokeDasharray="1 1" strokeWidth="2" /></svg>;
    case "bright":
      return <svg width="24" height="24" viewBox="0 0 24 24"><path d="M3 9h9V5l8 7-8 7v-4H3z" fill="#0a1a85" /><path d="M3 12h7" stroke="#7fb7e8" strokeDasharray="1 1" strokeWidth="2" /></svg>;
    case "eye":
      return <svg width="24" height="24" viewBox="0 0 24 24" fill="none"><path d="M3 12L18 4v16z" fill="#fff" stroke="#111" strokeWidth="1.5" /><path d="M20 2v20" stroke="#111" strokeWidth="2" /><circle cx="14" cy="12" r="2.5" fill="#1d2fb5" /></svg>;
    default:
      return <svg width="22" height="24" viewBox="0 0 22 24"><path d="M6 11V7a5 5 0 0110 0v4" fill="none" stroke="#111" strokeWidth="2.2" /><rect x="2" y="11" width="18" height="12" fill="#0b0bc2" stroke="#111" /><circle cx="11" cy="16" r="2" fill="#fff" /><rect x="10" y="16" width="2" height="4" fill="#fff" /></svg>;
  }
}

const toolRows = [
  ["move", "orbit", "pan"],
  ["zbox", "z", "zp", "zn", "ze", "zs", "zw"],
  ["center", "p1", "p2", "p3", "rot"],
  ["zplane", "ns", "ew", "pencil"],
  ["split", "join", "barsOn", "bars1", "bars2", "bars3", "bars4"],
  ["mirror", "left", "right"],
  ["bleft", "bright"],
  ["eye", "lock"],
];

function ViewToolbar() {
  return (
    <div className="flex h-[32px] shrink-0 bg-[#a8d1f3]">
      <div className="flex h-full w-[1006px] items-center rounded-r bg-gradient-to-b from-[#d3e9fb] via-[#a2cef3] to-[#6eaee5] pl-[5px] shadow-[0_1px_0_#356ea8]">
        <div className="mr-[3px] h-[16px] w-[2px] border-l-2 border-dotted border-[#222]" />
        {toolRows.map((row, i) => (
          <React.Fragment key={i}>
            {i > 0 && <div className="mx-[4.5px] h-[24px] w-px bg-[#eef7ff]" />}
            {row.map((k) => (
              <div key={k} className="flex h-[28px] w-[28px] items-center justify-center">
                <ToolIcon k={k} />
              </div>
            ))}
          </React.Fragment>
        ))}
      </div>
    </div>
  );
}

// --- 3D viewport drawing, in page coordinates ---
const holeRows: [number, number[]][] = [
  [507, [467, 505, 541, 578, 613, 650, 683, 723, 757, 797, 830, 866, 902, 934]],
  [561, [467, 505, 541, 577, 607, 650, 683, 720, 757, 793, 830, 868, 934, 970, 1007]],
  [616, [467, 505, 540, 576, 612, 649, 684, 719, 757, 793, 830, 868, 898, 934]],
  [670, [467, 503, 539, 576, 612, 649, 684, 721, 757, 793, 826, 862, 898, 934, 970, 1007, 1043]],
  [725, [467, 503, 538, 576, 612, 648, 684, 721, 757, 793, 826, 862, 898, 934, 970, 1007, 1043]],
  [780, [467, 503, 538, 576, 612, 648, 684, 721, 757, 793, 826, 862, 898, 925, 970, 1007, 1043]],
  [832, [503, 538, 576, 612, 648, 684, 721, 757, 789, 826, 862, 898, 934, 970, 1007, 1043]],
  [887, [467, 503, 539, 576, 612, 647, 684, 721, 757, 789, 826, 862, 898, 934, 970]],
  [941, [465, 503, 539, 576, 612, 647, 684, 721, 759, 793]],
  [996, [469, 503, 539, 576, 607, 648, 686, 721, 761, 793, 830]],
  [1050, [467, 503, 539, 574, 612, 648, 686, 721, 759, 793, 830]],
  [1105, [467, 502, 539, 576, 612, 645, 681, 716]],
];

const eastings = [
  [1134, "417000 E"],
  [1315, "417500 E"],
  [1497, "418000 E"],
  [1678, "418500 E"],
  [1859, "419000 E"],
] as const;

function Viewport() {
  const vLines = Array.from({ length: 41 }, (_, i) => 1134 + i * 18.12);
  const hLines = Array.from({ length: 25 }, (_, i) => 243 + i * 18.07);
  const holes = holeRows.flatMap(([y, xs]) => xs.map((x) => [1120 + x / 2, 200 + y / 3]));
  holes.push([1390.5, 351], [1564.5, 381.5]);
  const lbl = { fontFamily: "'Liberation Sans', sans-serif", fontSize: 14, fill: "#868e99" };
  return (
    <svg width="735" height="441" viewBox="1130 240 735 441" className="block">
      <defs>
        <linearGradient id="sky" x1="0" y1="0" x2="0" y2="1">
          <stop offset="0" stopColor="#00305f" />
          <stop offset="1" stopColor="#000" />
        </linearGradient>
      </defs>
      <rect x="1130" y="240" width="735" height="441" fill="url(#sky)" />
      {vLines.map((x, i) => <path key={i} d={`M${x} 240V681`} stroke="#fff" strokeOpacity={i % 10 === 0 ? 0.5 : 0.32} />)}
      {hLines.map((y, i) => <path key={i} d={`M1130 ${y}H1865`} stroke="#fff" strokeOpacity={i === 6 || i === 16 ? 0.55 : 0.36} />)}
      <text x="1150" y="356" {...lbl}>633500 N</text>
      <text x="1785" y="356" {...lbl}>633500 N</text>
      <text x="1150" y="537" {...lbl}>633000 N</text>
      <text x="1785" y="537" {...lbl}>633000 N</text>
      {eastings.map(([x, t]) => (
        <React.Fragment key={t}>
          <text transform={`translate(${x + 5} 318) rotate(-90)`} {...lbl}>{t}</text>
          <text transform={`translate(${x + 5} 662) rotate(-90)`} {...lbl}>{t}</text>
        </React.Fragment>
      ))}
      {holes.map(([x, y], i) => <circle key={i} cx={x} cy={y} r="4.7" fill="none" stroke="#cc1414" strokeWidth="1.3" />)}
      <circle cx="1496.7" cy="460" r="97" fill="none" stroke="#35e6e6" strokeWidth="1.2" />
      <circle cx="1496.7" cy="460" r="81" fill="none" stroke="#1010e0" strokeWidth="1.2" />
      <path d="M1496.7 380V541" stroke="#e03030" />
      <path d="M1416 460.5H1578" stroke="#10e020" strokeWidth="1.5" />
      <path d="M1496.7 399l-4 13h8z" fill="#10e020" />
      <path d="M1546 456v9l13-4z" fill="#f01010" /><rect x="1546" y="456" width="6" height="9" fill="#f01010" />
      <circle cx="1497.5" cy="460" r="4.3" fill="#1010e0" />
      <path d="M1498 390l3.5 3.5 3.5-3.5M1501.5 393.5v5" stroke="#10e020" fill="none" />
      <path d="M1562 452l6 7M1568 452l-6 7" stroke="#e03030" />
      <path d="M1499 452h4l-4 5h4" stroke="#1010e0" fill="none" />
      {[[1497, 363, "V"], [1497, 558, "V"], [1400, 460, "H"], [1595, 460, "H"]].map(([x, y, t]) => (
        <g key={`${x}-${y}`}>
          <rect x={(x as number) - 6.5} y={(y as number) - 6.5} width="13" height="13" fill="none" stroke="#35e6e6" />
          <text x={x as number} y={(y as number) + 3.5} textAnchor="middle" fontSize="10" fontFamily="'Liberation Sans', sans-serif" fill="#35e6e6">{t as string}</text>
        </g>
      ))}
    </svg>
  );
}

// --- tree ---
function FolderIcon({ open }: { open?: boolean }) {
  return (
    <svg width="16" height="13" viewBox="0 0 16 13">
      <path d="M1 12V2h5l1 2h8v8z" fill={open ? "#fff" : "#f2c230"} stroke="#6b5a20" />
      {open && <path d="M1 12l3-6h12l-3 6z" fill="#dcae2a" stroke="#5a4a18" />}
    </svg>
  );
}

function Expander({ open }: { open?: boolean }) {
  return (
    <div className="relative flex h-[10px] w-[10px] items-center justify-center border border-[#8a9aa8] bg-gradient-to-b from-white to-[#dfe3e8]">
      <div className="h-px w-[6px] bg-[#22456a]" />
      {!open && <div className="absolute h-[6px] w-px bg-[#22456a]" />}
    </div>
  );
}

function LeafIcon() {
  return (
    <svg width="17" height="11" viewBox="0 0 17 11">
      <path d="M8.5 0L17 5.5 8.5 11 0 5.5z" fill="#19a0d8" />
      <path d="M8.5 3.5L12 5.5 8.5 7.5 5 5.5z" fill="#fff" />
    </svg>
  );
}

const treeData = [
  { label: "All Files (*.*) [39]", items: null },
  { label: "All Tables (*.dm) [38]", items: null },
  { label: "Assays [4]", items: ["assay", "badgap", "hls_err"] },
  { label: "Collars [1]", items: ["collar"] },
  { label: "Drillholes [3]", items: ["holes", "holes1"] },
  { label: "Points [5]", items: ["bbotpts", "lbotpts", "ltoppts", "sbotpts"] },
];

function TreeRow({ children, className = "" }: { children: React.ReactNode; className?: string }) {
  return <div className={`flex h-[22px] items-center whitespace-nowrap ${className}`}>{children}</div>;
}

function Tree() {
  return (
    <div className="relative h-[385px] overflow-hidden bg-white text-[14px] text-[#23374b]">
      <TreeRow className="pl-[9px]">
        <Expander open />
        <svg width="15" height="15" viewBox="0 0 15 15" className="ml-[6px]" fill="#1d7fae">
          <path d="M7.5 1l3 1.5v3l-3 1.5-3-1.5v-3zM4 7l3 1.5v3L4 13l-3-1.5v-3zM11 7l3 1.5v3L11 13l-3-1.5v-3z" />
        </svg>
        <span className="ml-[6px] font-bold text-[#111]">Project1.rmproj</span>
      </TreeRow>
      {/* dotted guide running down through the folders */}
      <div className="absolute left-[32px] top-[23px] h-[266px] border-l border-dotted border-[#666]" />
      {treeData.map((f) => (
        <div key={f.label}>
          <TreeRow className="relative pl-[27px]">
            <Expander open={!!f.items} />
            <div className="ml-[7px] w-[16px]"><FolderIcon open={!!f.items} /></div>
            <span className="ml-[3px]">{f.label}</span>
          </TreeRow>
          {f.items?.map((leaf, i) => (
            <TreeRow key={leaf} className="relative pl-[61px]">
              <div className={`absolute left-[50px] top-0 border-l border-dotted border-[#666] ${i === f.items!.length - 1 ? "h-[11px]" : "h-[22px]"}`} />
              <div className="absolute left-[50px] top-[11px] w-[10px] border-t border-dotted border-[#666]" />
              <LeafIcon />
              <span className="ml-[5px]">{leaf}</span>
            </TreeRow>
          ))}
        </div>
      ))}
    </div>
  );
}

function PinClose({ size = "text-[13px]" }: { size?: string }) {
  return (
    <div className={`flex items-center gap-[12px] ${size}`}>
      <svg width="10" height="13" viewBox="0 0 10 13" fill="none" stroke="#111" strokeWidth="1.5">
        <path d="M2 1h6v6H2zM0 7.5h10M5 8v5M6.5 1v6" />
      </svg>
      <svg width="11" height="11" viewBox="0 0 11 11" stroke="#111" strokeWidth="2">
        <path d="M1 1l9 9M10 1l-9 9" />
      </svg>
    </div>
  );
}

function PanelTab({ w, color, icon, label, active }: { w: string; color: string; icon: React.ReactNode; label: string; active?: boolean }) {
  return (
    <div className={`flex h-[26px] shrink-0 items-center justify-center gap-[4px] bg-gradient-to-b text-[12.5px] text-[#1b2b3a] ${w} ${color} ${active ? "border-x border-b-2 border-[#1a5fb4]" : ""}`}>
      {icon}
      <span>{label}</span>
    </div>
  );
}

function ProjectPanel() {
  return (
    <div className="flex w-[266px] shrink-0 flex-col">
      <div className="flex h-[28px] shrink-0 items-center justify-between border-b border-[#6aaee5] bg-gradient-to-b from-[#cfe7fb] to-[#6eaee5] pl-[4px] pr-[7px] text-[13px] text-[#1b2b3a]">
        Project Files
        <PinClose />
      </div>
      <div className="flex h-[420px] shrink-0 flex-col border-2 border-[#fcd77f]">
        <div className="flex h-[31px] shrink-0 items-center bg-gradient-to-b from-[#d8ecfc] to-[#7fb6e6] pl-[5px]">
          <svg width="22" height="20" viewBox="0 0 22 20"><path d="M6 2v16M1 4h6l-2-2M1 10h6l-2-2M1 16h6l-2-2" stroke="#e01818" strokeWidth="1.5" fill="none" /><path d="M10 3h6M10 6h6M10 9h6M10 12h6M10 15h6M10 18h6M17 3h4M17 6h4M17 9h4" stroke="#334" strokeWidth="1.5" /></svg>
          <div className="ml-[9px] h-[18px] w-px bg-white" />
          <svg width="18" height="20" viewBox="0 0 18 20" className="ml-[10px]"><path d="M1 1h12l4 4v14H1z" fill="#f6f6f6" stroke="#8a8a8a" /><path d="M5 9c1-4 7-3 7 0M13 11c-1 4-7 3-7 0" stroke="#1ea336" strokeWidth="2" fill="none" /></svg>
          <div className="ml-[10px] h-[18px] w-px bg-white" />
          <svg width="22" height="20" viewBox="0 0 22 20" className="ml-[7px]"><path d="M6 3h9l5 5v11H6z" fill="#fff" stroke="#223" /><path d="M1 6l4 4-4 4z" fill="#1a3fa8" /><circle cx="6" cy="4" r="2" fill="#f2dd30" /></svg>
          <svg width="22" height="20" viewBox="0 0 22 20" className="ml-[6px]"><path d="M4 3h9l4 3v10H4z" fill="#dde" stroke="#556" /><path d="M8 6h10l3 2v11H8z" fill="#eef" stroke="#334" /><path d="M1 8l4 4-4 4z" fill="#1a3fa8" /></svg>
          <svg width="22" height="20" viewBox="0 0 22 20" className="ml-[6px]"><path d="M7 3l8 3v12l-8-3z" fill="#fff" stroke="#223" /><path d="M1 7l5 4-5 4z" fill="#1a3fa8" /><path d="M15 17c3 2 5 0 4-3" stroke="#223" fill="none" /></svg>
          <div className="ml-[9px] h-[18px] w-px bg-white" />
          <svg width="22" height="20" viewBox="0 0 22 20" opacity=".6" className="ml-[8px]"><path d="M4 9V6a4 4 0 018 0v3" fill="none" stroke="#687" strokeWidth="2" /><rect x="1" y="9" width="14" height="10" fill="#687" /><path d="M16 6l5 5-5 5z" fill="#4caf64" /></svg>
        </div>
        <Tree />
      </div>
      <div className="flex h-[27px] shrink-0 pl-[3px]">
        <PanelTab w="w-[51px]" color="from-[#f2f6fe] to-[#c9d7f0]" label="C..." icon={<svg width="16" height="16" viewBox="0 0 16 16"><circle cx="8" cy="8" r="7.5" fill="#7fb3e0" /><path d="M3 5c3-3 7-2 6 2s-5 5-6 3z" fill="#d9e9f7" /></svg>} />
        <PanelTab w="w-[51px]" color="from-[#fff6b0] to-[#fbd36e]" active label="P..." icon={<svg width="14" height="18" viewBox="0 0 14 18"><path d="M1 3v12c0 3 12 3 12 0V3z" fill="#d5d5d5" stroke="#222" /><ellipse cx="7" cy="3" rx="6" ry="2" fill="#eee" stroke="#222" /><path d="M1 8c0 2 12 2 12 0M1 12c0 2 12 2 12 0" stroke="#222" fill="none" /></svg>} />
        <PanelTab w="w-[52px]" color="from-[#e2efcb] to-[#bdd39a]" label="S..." icon={<svg width="18" height="16" viewBox="0 0 18 16" fill="#fff" stroke="#111"><rect x="1" y="1" width="11" height="9" /><rect x="4" y="4" width="11" height="9" /><rect x="6" y="6" width="11" height="9" /></svg>} />
        <PanelTab w="w-[50px]" color="from-[#fbcaca] to-[#f1a6a6]" label="L..." icon={<svg width="16" height="20" viewBox="0 0 16 20"><rect x="3" y="1" width="8" height="10" rx="3" fill="#f2e130" stroke="#222" /><path d="M6 12l3 3-3 4M3 16h8" stroke="#222" fill="none" /></svg>} />
        <PanelTab w="w-[51px]" color="from-[#e6d2f3] to-[#cdb0e8]" label="H..." icon={<svg width="16" height="16" viewBox="0 0 16 16" fill="#fff" stroke="#111"><rect x="1" y="1" width="14" height="14" /><path d="M3 10l4 3 7-9" fill="none" stroke="#333" /></svg>} />
      </div>
    </div>
  );
}

function DocTab({ label, w, cls, icon, ml = "", bold }: { label: string; w: string; cls: string; icon: React.ReactNode; ml?: string; bold?: boolean }) {
  return (
    <div className={`flex h-[26px] shrink-0 items-center bg-gradient-to-b ${w} ${cls} ${ml}`}>
      {icon}
      <span className={`whitespace-nowrap text-[12.5px] text-[#1b2b3a] ${bold ? "text-[14px] font-bold text-black" : ""}`}>{label}</span>
    </div>
  );
}

function DocArea() {
  return (
    <div className="ml-[7px] flex w-[739px] shrink-0 flex-col">
      <div className="flex h-[29px] shrink-0 items-end justify-between bg-gradient-to-b from-[#cfe7fb] to-[#6eaee5] pl-[2px] pr-[6px]">
        <div className="flex">
          <DocTab w="w-[105px]" cls="from-[#eef3ff] to-[#c5d0ea] [clip-path:polygon(24px_0,100%_0,84px_100%,0_100%)] pl-[30px] gap-[12px]" label="Start"
            icon={<svg width="20" height="20" viewBox="0 0 20 20"><circle cx="10" cy="10" r="9.5" fill="#7fb3e0" /><path d="M4 6c4-4 9-3 8 2s-7 6-8 3z" fill="#dceafa" /></svg>} />
          <DocTab w="w-[90px]" ml="ml-[-20px]" cls="from-[#fffbb5] to-[#fbcf6a] [clip-path:polygon(20px_0,100%_0,100%_100%,0_100%)] pl-[24px] gap-[12px]" label="3D" bold
            icon={<svg width="20" height="20" viewBox="0 0 20 20"><circle cx="10" cy="10" r="9" fill="#eee" stroke="#222" strokeDasharray="2 1" strokeWidth="2" /><path d="M5 7h9M6 11h9M7 14h5" stroke="#222" strokeDasharray="2 1" /><circle cx="5" cy="16" r="3" fill="#11a0b8" /></svg>} />
          <DocTab w="w-[81px]" ml="ml-px" cls="from-[#e6efd2] to-[#b9c99a] pl-[9px] gap-[9px]" label="Files"
            icon={<svg width="22" height="22" viewBox="0 0 15 15" fill="#1d8fc7"><path d="M7.5 1l3 1.5v3l-3 1.5-3-1.5v-3zM4 7l3 1.5v3L4 13l-3-1.5v-3zM11 7l3 1.5v3L11 13l-3-1.5v-3z" /></svg>} />
          <DocTab w="w-[84px]" cls="from-[#fbcaca] to-[#f0a2a2] pl-[10px] gap-[10px]" label="Plots"
            icon={<svg width="19" height="20" viewBox="0 0 19 20" fill="#fff" stroke="#111" strokeWidth="1.3"><rect x="1" y="1" width="17" height="18" /><path d="M1 5h17M4 3h11" /><path d="M5 15l6-6" stroke="#c01010" /></svg>} />
        </div>
        <div className="mb-[7px] flex items-center gap-[12px]">
          <span className="inline-block border-x-[5px] border-t-[6px] border-x-transparent border-t-[#111]" />
          <svg width="11" height="11" viewBox="0 0 11 11" stroke="#111" strokeWidth="2"><path d="M1 1l9 9M10 1l-9 9" /></svg>
        </div>
      </div>
      <div className="h-[445px] shrink-0 border-2 border-[#fcd77f] bg-black">
        <Viewport />
      </div>
    </div>
  );
}

function CommandPanel() {
  const lines = [
    " >>>     167 RECORDS COPIED",
    " >>>     167 Records in File:",
    "         C:\\Database\\Project1\\t_26.dm",
    ">>> SELCOP   Complete <<<",
    "",
    " >>>     167 Records in File:",
    "         c:\\database\\project1\\sbotpts.dm",
    " >>>     167 records written <<<",
    ">>> EXTRA    Complete <<<",
  ];
  return (
    <div className="flex h-[277px] shrink-0 flex-col">
      <div className="ml-[3px] flex h-[26px] w-[1010px] shrink-0 items-center justify-between border-b border-[#6aaee5] bg-gradient-to-b from-[#cfe7fb] to-[#6eaee5] pl-[1px] pr-[7px] text-[13px] text-[#1b2b3a]">
        Command
        <PinClose />
      </div>
      <div className="ml-[3px] flex h-[190px] w-[1010px] shrink-0 border border-[#4fa8ec] border-b-[#1a5fb4] bg-white">
        <pre className="flex-1 pl-[2px] pt-[18px] text-[13.33px] leading-[16px] text-[#222]" style={{ fontFamily: "'Liberation Mono', monospace" }}>
          {lines.join("\n")}
        </pre>
        <div className="flex w-[20px] shrink-0 flex-col items-center bg-[#f4f4f4] py-[8px]">
          <svg width="10" height="7" viewBox="0 0 10 7" fill="none" stroke="#555" strokeWidth="1.5"><path d="M1 6l4-4 4 4" /></svg>
          <div className="mt-[131px] h-[21px] w-[16px] bg-[#c6c6c6]" />
          <svg width="10" height="7" viewBox="0 0 10 7" fill="none" stroke="#555" strokeWidth="1.5" className="mt-[5px]"><path d="M1 1l4 4 4-4" /></svg>
        </div>
      </div>
      <div className="ml-[3px] flex h-[27px] w-[1010px] shrink-0 bg-gradient-to-b from-[#8fc2ee] to-[#a6d2f5]">
        <div className="flex h-[26px] w-[100px] items-center gap-[5px] border-b-2 border-[#1a5fb4] bg-gradient-to-b from-[#cfd8f2] to-[#ecf4fe] pl-[7px] pt-[2px] text-[13px] text-[#1b2b3a]">
          <svg width="16" height="16" viewBox="0 0 16 16" fill="#fff" stroke="#111"><rect x=".5" y=".5" width="15" height="15" /><rect x=".5" y=".5" width="15" height="3" fill="#1a1a9a" /><path d="M3 9l2 2-2 2" /></svg>
          Command
        </div>
        <div className="flex h-[26px] w-[81px] items-center gap-[7px] border-b-2 border-[#1a5fb4] bg-gradient-to-b from-[#fff6b0] to-[#fbd36e] pl-[8px] pt-[2px] text-[13px] text-[#1b2b3a]">
          <svg width="14" height="16" viewBox="0 0 14 16" fill="#fff" stroke="#111"><rect x=".5" y=".5" width="13" height="15" /><rect x=".5" y=".5" width="13" height="3" fill="#1a1a9a" /><path d="M3 7h8M3 10h8M3 13h8" /></svg>
          Output
        </div>
        <div className="flex h-[26px] w-[138px] items-center gap-[3px] bg-gradient-to-b from-[#e2efcb] to-[#bdd39a] pl-[5px] pt-[2px] text-[13px] text-[#1b2b3a]">
          <svg width="18" height="18" viewBox="0 0 18 18"><rect x="1" y="1" width="16" height="16" fill="#fff" /><path d="M3 5h10M3 9h8M3 13h10" stroke="#222" /><path d="M5 11l3 5 6-15" stroke="#d01818" strokeWidth="1.5" fill="none" /></svg>
          Desurvey Report
        </div>
      </div>
      <div className="flex h-[34px] shrink-0 items-start pl-[2px] text-[13px] text-[#1b2b3a]">
        <div className="flex h-[32px] w-[451px] items-center bg-gradient-to-b from-[#cfe7fb] via-[#a2cef3] to-[#6eaee5] pl-[3px] pt-[1px]">
          <div className="h-[18px] border-l-2 border-dotted border-[#222]" />
          <span className="ml-[7px] w-[42px] text-[13px] tracking-[1px]">!&gt;&gt;&gt;</span>
          <div className="flex h-[24px] w-[294px] justify-end border border-[#9ecbf0] bg-white">
            <div className="flex w-[16px] items-center justify-center bg-[#a8d1f3]"><TinyArrow /></div>
          </div>
          <svg width="18" height="16" viewBox="0 0 18 16" fill="none" stroke="#15802c" strokeWidth="3.5" className="ml-[7px]"><path d="M2 8l5 5 9-12" /></svg>
          <svg width="14" height="16" viewBox="0 0 14 16" stroke="#c87070" strokeWidth="3.5" className="ml-[13px]"><path d="M1 2l12 12M13 2L1 14" /></svg>
          <div className="ml-[12px] h-[20px] w-px bg-[#eef7ff]" />
          <svg width="20" height="22" viewBox="0 0 20 22" fill="none" className="ml-[9px]"><circle cx="13" cy="7" r="5.5" stroke="#aaa" strokeWidth="1.5" fill="#dff0ff" /><path d="M9 12l-7 9" stroke="#e0b040" strokeWidth="2.5" /></svg>
        </div>
        <div className="ml-[2px] flex h-[32px] w-[585px] items-center gap-[7px] bg-gradient-to-b from-[#cfe7fb] via-[#a2cef3] to-[#6eaee5] pl-[3px] pt-[1px]">
          <div className="h-[18px] border-l-2 border-dotted border-[#222]" />
          <div className="flex h-[25px] w-[181px] items-center justify-between bg-white pl-[5px]">Strings
            <div className="flex h-full w-[16px] items-center justify-center bg-[#a8d1f3]"><TinyArrow /></div>
          </div>
          <div className="flex h-[25px] w-[182px] justify-end bg-white"><div className="flex h-full w-[16px] items-center justify-center bg-[#a8d1f3]"><TinyArrow /></div></div>
          <div className="flex h-[25px] w-[69px] justify-end bg-white"><div className="flex h-full w-[16px] items-center justify-center bg-[#a8d1f3]"><TinyArrow /></div></div>
          <div className="h-[25px] w-[121px] bg-white" />
        </div>
      </div>
    </div>
  );
}

function StudioWindow() {
  return (
    <div className="relative flex h-[994px] w-[1040px] shrink-0 flex-col bg-[#a8d1f3] shadow-[0_0_2px_rgba(0,0,0,0.6)]" style={{ fontFamily: UI }}>
      {/* title bar */}
      <div className="relative flex h-[32px] shrink-0 items-center bg-white pl-[74px]">
        <svg width="18" height="20" viewBox="0 0 18 20">
          <rect x="1" y="2" width="14" height="17" fill="#dff0ff" stroke="#2a77b8" />
          <path d="M0 4h8M3 1L0 4l3 3" stroke="#1a4a9a" fill="none" strokeWidth="1.5" />
          <path d="M4 10h8M4 13h6" stroke="#355" />
          <path d="M6 15l3 3 7-9" stroke="#e01818" strokeWidth="2" fill="none" />
        </svg>
        <div className="ml-[7px] flex flex-col items-center gap-[2px]">
          <div className="h-px w-[6px] bg-[#222]" />
          <TinyArrow />
        </div>
        <div className="absolute left-[325px] whitespace-nowrap text-[13.9px] font-bold text-[#111]">Studio RM (64-bit) - Project1.rmproj * - [3D]</div>
        <div className="absolute left-[830px] top-0 flex h-[31px] w-[16px] items-center justify-center bg-gradient-to-b from-[#a6c9ef] to-[#8db5e8] text-[9px]">I.</div>
        <svg width="13" height="2" viewBox="0 0 13 2" className="absolute left-[888px] top-[7px]"><path d="M0 1h13" stroke="#999" /></svg>
        <div className="absolute left-[946px] top-[3px] h-[11px] w-[11px] border border-[#888]" />
        <svg width="13" height="13" viewBox="0 0 13 13" stroke="#999" className="absolute left-[1004px] top-[2px]"><path d="M0 0l13 13M13 0L0 13" /></svg>
      </div>
      <div className="absolute left-[3px] top-[-6px] z-10 flex h-[52px] w-[52px] items-center justify-center rounded-full border border-[#5cb6f2] bg-[#d4eafc]">
        <svg width="32" height="32" viewBox="0 0 15 15" fill="#1d7fae">
          <path d="M7.5 1l3 1.5v3l-3 1.5-3-1.5v-3zM4 7l3 1.5v3L4 13l-3-1.5v-3zM11 7l3 1.5v3L11 13l-3-1.5v-3z" />
        </svg>
      </div>
      <Ribbon />
      <ViewToolbar />
      {/* dock area */}
      <div className="flex h-[483px] shrink-0 pl-[1px]">
        <ProjectPanel />
        <DocArea />
        <div className="ml-[3px] mt-[6px] flex h-[130px] w-[24px] shrink-0 flex-col items-center rounded-sm border border-[#4fa8ec] bg-gradient-to-r from-[#fdf2d8] to-[#f7b25a]">
          <svg width="20" height="20" viewBox="0 0 20 20" fill="none" className="mt-[1px]">
            <circle cx="9" cy="9" r="6.5" fill="#8fd8ea" stroke="#222" strokeWidth="1.5" />
            <path d="M14 14l5 5" stroke="#c01010" strokeWidth="2.5" />
            <path d="M2 16l6-6" stroke="#c01010" />
          </svg>
          <span className="mt-[3px] text-[13.5px] text-[#555] [writing-mode:vertical-rl]">Compositor</span>
        </div>
      </div>
      <CommandPanel />
      {/* status bar */}
      <div className="flex h-[25px] shrink-0 items-center bg-[#f0f0f0] pl-[5px] pt-[2px] text-[12.5px] text-[#1b2b3a] shadow-[inset_0_1px_0_#ddd]">
        <span className="w-[609px]">For Help, press F1</span>
        <div className="h-full w-[80px] border-l border-[#ddd]" />
        <div className="h-full w-[80px] border-l border-[#ddd]" />
        <div className="h-full w-[80px] border-l border-[#ddd]" />
        <div className="flex h-full items-center border-l border-[#ddd] pl-[5px]">Section Level 78.22</div>
      </div>
    </div>
  );
}

export default function App() {
  return (
    <div className="relative flex h-[1003px] w-[1904px] overflow-hidden bg-white">
      <Browser />
      <div className="w-px shrink-0 bg-[#444]" />
      <StudioWindow />
      {/* bits of whatever sits behind the window on the right */}
      <div className="absolute left-[1893px] top-[22px] h-[18px] w-[18px] rounded-full bg-[#2a6bb0]" />
      <div className="absolute bottom-[-3px] right-[2px] h-[8px] w-[22px] border border-[#4fa8ec] bg-[#cfe0f3]" />
      <div className="absolute bottom-[1px] right-[30px] flex items-center gap-[2px]">
        <div className="h-[5px] w-[5px] border border-[#777]" />
        <div className="h-px w-[5px] bg-[#777]" />
        <div className="h-px w-[5px] bg-[#777]" />
      </div>
    </div>
  );
}
